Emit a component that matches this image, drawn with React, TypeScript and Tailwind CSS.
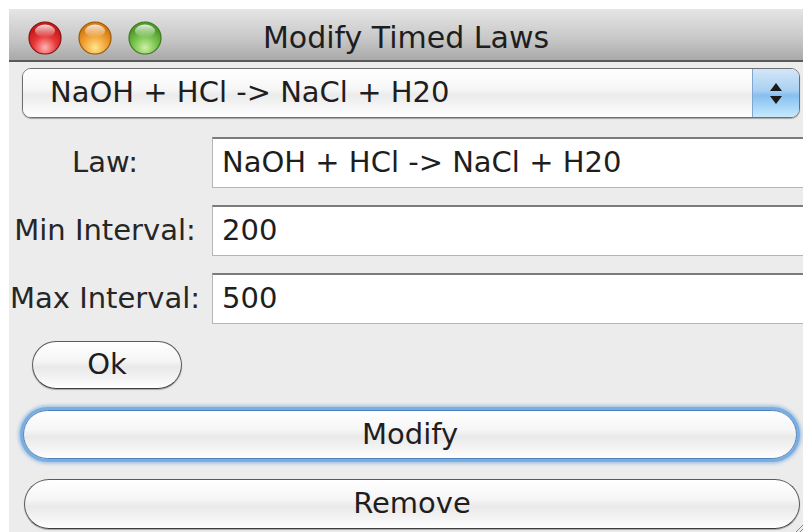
import React from "react";

const font = { fontFamily: "'DejaVu Sans', 'Liberation Sans', sans-serif" };

// Aqua style window light (close / minimise / zoom)
function Light({ id, rim, top, mid, bottom }: { id: string; rim: string; top: string; mid: string; bottom: string }) {
  return (
    <svg width="34" height="34" viewBox="0 0 34 34">
      <defs>
        <radialGradient id={`${id}-body`} cx="50%" cy="80%" r="65%">
          <stop offset="0%" stopColor={bottom} />
          <stop offset="55%" stopColor={mid} />
          <stop offset="100%" stopColor={top} />
        </radialGradient>
        <linearGradient id={`${id}-shine`} x1="0" y1="0" x2="0" y2="1">
          <stop offset="0%" stopColor="#ffffff" stopOpacity="0.85" />
          <stop offset="100%" stopColor="#ffffff" stopOpacity="0" />
        </linearGradient>
      </defs>
      <circle cx="17" cy="17" r="16" fill={`url(#${id}-body)`} stroke={rim} strokeWidth="1.2" />
      <ellipse cx="17" cy="10" rx="10" ry="6.5" fill={`url(#${id}-shine)`} />
    </svg>
  );
}

function TextField({ value }: { value: string }) {
  return (
    <div className="flex-1 -mr-[6px] h-[51px] flex items-center bg-white pl-[9px] border border-[#b5b5b5] border-t-[#7b7b7b] border-t-2 text-[29px] text-[#1e1e1e] whitespace-nowrap">
      {value}
    </div>
  );
}

function FieldRow({ label, value }: { label: string; value: string }) {
  return (
    <div className="flex items-center h-[51px]">
      <div className="w-[192px] flex justify-center whitespace-nowrap text-[29px] text-[#262626]">{label}</div>
      <div className="w-[11px]" />
      <TextField value={value} />
    </div>
  );
}

const pillBase =
  "flex items-center justify-center rounded-full border bg-[linear-gradient(to_bottom,#ffffff_0%,#f6f6f6_40%,#e9e9e9_55%,#f4f4f4_80%,#ffffff_100%)] text-[29px] text-[#1e1e1e]";
const pillPlain = `${pillBase} border-[#5a5a5a] border-b-[#3f3f3f] shadow-[0_1px_1px_rgba(0,0,0,0.3)]`;
const pillFocused = `${pillBase} border-[#4a82bd] shadow-[0_0_0_3px_#7aade0,0_0_3px_5px_rgba(110,165,222,0.5)]`;

export default function App() {
  return (
    <div style={font} className="w-[803px] h-[532px] overflow-hidden bg-white pl-[9px] pt-[9px]">
      <div className="relative h-full flex flex-col bg-[#ececec]">
        {/* title bar */}
        <div className="h-[53px] shrink-0 pt-[5px] grid grid-cols-[1fr_auto_1fr] items-center border-b-2 border-[#5a5a5a] border-t border-t-[#e6e6e6] bg-[linear-gradient(to_bottom,#e4e4e4,#c9c9c9_55%,#a9a9a9)]">
          <div className="flex items-center gap-[16px] pl-[19px]">
            <Light id="close" rim="#8b1111" top="#c81a1a" mid="#e8393a" bottom="#ffb3b3" />
            <Light id="min" rim="#9a5a06" top="#d77a12" mid="#f2a43a" bottom="#ffe58c" />
            <Light id="zoom" rim="#3d7a1f" top="#4f9a2a" mid="#7cc452" bottom="#cdf0a4" />
          </div>
          <div className="text-[30px] text-[#1e1e1e]">Modify Timed Laws</div>
          <div />
        </div>

        {/* law picker */}
        <div className="mt-[6px] ml-[13px] mr-[3px] h-[50px] flex rounded-[9px] border border-[#6f6f6f] overflow-hidden shadow-[0_1px_1px_rgba(0,0,0,0.3)]">
          <div className="flex-1 flex items-center pl-[27px] text-[29px] text-[#1e1e1e] whitespace-nowrap bg-[linear-gradient(to_bottom,#ffffff_0%,#f7f7f7_40%,#ebebeb_55%,#f6f6f6_80%,#ffffff_100%)]">
            NaOH + HCl -&gt; NaCl + H20
          </div>
          <div className="w-[47px] flex flex-col items-center justify-center gap-[5px] border-l border-[#7fa8d0] bg-[linear-gradient(to_bottom,#d3e6f8_0%,#a9d0f2_45%,#86bff0_55%,#c6eafd_100%)]">
            <svg width="12" height="8" viewBox="0 0 12 8">
              <path d="M6 0 L12 8 L0 8 Z" fill="#1a1a1a" />
            </svg>
            <svg width="12" height="8" viewBox="0 0 12 8">
              <path d="M0 0 L12 0 L6 8 Z" fill="#1a1a1a" />
            </svg>
          </div>
        </div>

        {/* fields */}
        <div className="mt-[19px] flex flex-col gap-[17px]">
          <FieldRow label="Law:" value="NaOH + HCl -> NaCl + H20" />
          <FieldRow label="Min Interval:" value="200" />
          <FieldRow label="Max Interval:" value="500" />
        </div>

        <button className={`${pillPlain} mt-[17px] ml-[23px] w-[150px] h-[48px]`}>Ok</button>

        <button className={`${pillFocused} mt-[21px] ml-[14px] mr-[6px] h-[49px]`}>Modify</button>

        <button className={`${pillPlain} mt-[20px] ml-[15px] mr-[3px] h-[50px]`}>Remove</button>

        {/* resize grip */}
        <svg className="absolute right-0 bottom-0" width="10" height="10" viewBox="0 0 10 10">
          <path d="M10 3 L3 10 M10 7 L7 10" stroke="#8a8a8a" strokeWidth="1" />
        </svg>
      </div>
    </div>
  );
}
